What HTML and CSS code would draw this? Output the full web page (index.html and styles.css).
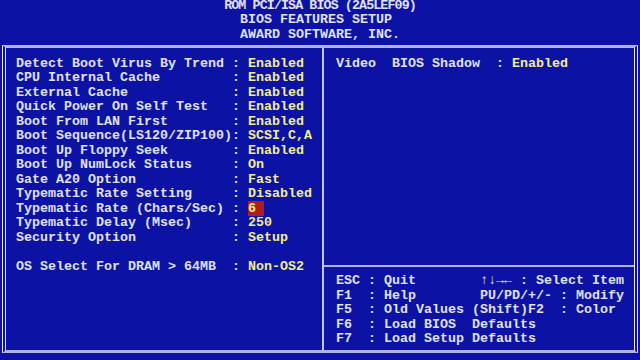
FILE: index.html
```html
<!DOCTYPE html>
<html lang="en">
<head>
    <meta charset="UTF-8">
    <title>BIOS Features Setup</title>
    <link rel="stylesheet" href="styles.css">
</head>
<body>
    <div class="screen">
        <div class="title">
            <div class="line rom">ROM PCI/ISA BIOS (2A5LEF09)</div>
            <div class="line">                              BIOS FEATURES SETUP</div>
            <div class="line">                              AWARD SOFTWARE, INC.</div>
        </div>
        <div class="frame">
            <div class="left">
                <div class="line">Detect Boot Virus By Trend : <span class="val">Enabled</span></div>
                <div class="line">CPU Internal Cache         : <span class="val">Enabled</span></div>
                <div class="line">External Cache             : <span class="val">Enabled</span></div>
                <div class="line">Quick Power On Self Test   : <span class="val">Enabled</span></div>
                <div class="line">Boot From LAN First        : <span class="val">Enabled</span></div>
                <div class="line">Boot Sequence(LS120/ZIP100): <span class="val">SCSI,C,A</span></div>
                <div class="line">Boot Up Floppy Seek        : <span class="val">Enabled</span></div>
                <div class="line">Boot Up NumLock Status     : <span class="val">On</span></div>
                <div class="line">Gate A20 Option            : <span class="val">Fast</span></div>
                <div class="line">Typematic Rate Setting     : <span class="val">Disabled</span></div>
                <div class="line">Typematic Rate (Chars/Sec) : <span class="val sel">6 </span></div>
                <div class="line">Typematic Delay (Msec)     : <span class="val">250</span></div>
                <div class="line">Security Option            : <span class="val">Setup</span></div>
                <div class="line"> </div>
                <div class="line">OS Select For DRAM &gt; 64MB  : <span class="val">Non-OS2</span></div>
            </div>
            <div class="right">
                <div class="options">
                    <div class="line">Video  BIOS Shadow  : <span class="val">Enabled</span></div>
                </div>
                <div class="keys">
                    <div class="line">ESC : Quit        ↑↓→← : Select Item</div>
                    <div class="line">F1  : Help        PU/PD/+/- : Modify</div>
                    <div class="line">F5  : Old Values (Shift)F2  : Color</div>
                    <div class="line">F6  : Load BIOS  Defaults</div>
                    <div class="line">F7  : Load Setup Defaults</div>
                </div>
            </div>
        </div>
    </div>
</body>
</html>
```

FILE: styles.css
```css
body {
    margin: 0;
    background: #0c12a4;
}
.screen {
    width: 640px;
    height: 360px;
    overflow: hidden;
    background: #0c12a4;
    color: #e2e2f0;
    font-family: 'Liberation Mono', monospace;
    font-weight: bold;
    font-size: 13.333px;
    line-height: 14.52px;
}
.line {
    height: 14.52px;
    white-space: pre;
}
.title {
    margin-top: -1.5px;
}
.rom {
    text-align: center;
    letter-spacing: -0.9px;
}
.frame {
    margin: 3px 2px 0 2px;
    height: 308px;
    box-sizing: border-box;
    border-top: 3px solid #b0b0ea;
    border-bottom: 3px solid #b0b0ea;
    border-left: 4px double #e6e6f6;
    border-right: 4px double #e6e6f6;
    display: grid;
    grid-template-columns: 318px 1fr;
}
.left {
    box-sizing: border-box;
    border-right: 2px solid #c4c4f0;
    padding: 8.5px 0 0 10px;
}
.right {
    display: flex;
    flex-direction: column;
}
.options {
    box-sizing: border-box;
    height: 219px;
    padding: 8.5px 0 0 12px;
    border-bottom: 2px solid #b0b0ea;
}
.keys {
    padding: 7.3px 0 0 12px;
}
.val {
    color: #f2ee98;
}
.sel {
    background: #b01c1c;
}
```
